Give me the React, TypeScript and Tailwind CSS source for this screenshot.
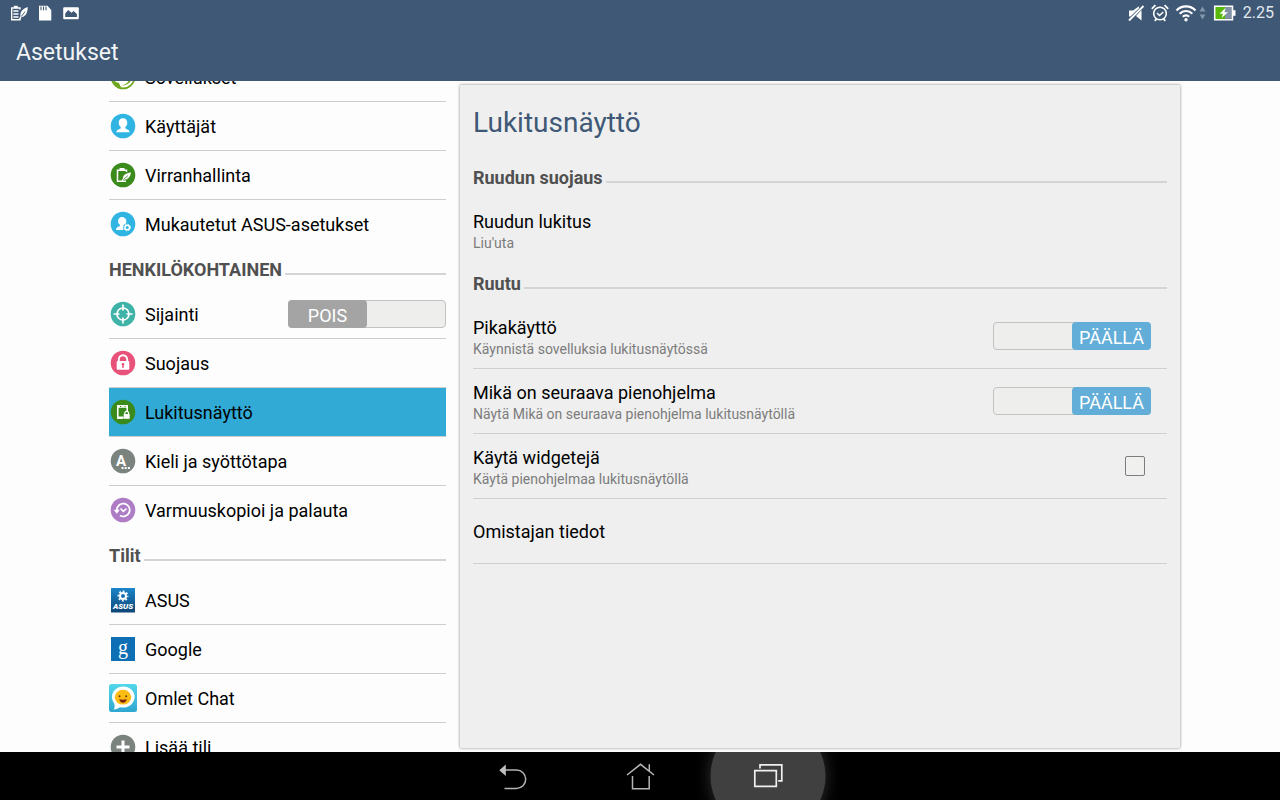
import { useState, type ReactNode } from 'react'
import clsx from 'clsx'

function Disc({ color, children }: { color: string; children: ReactNode }) {
  return (
    <svg viewBox="0 0 28 28" className="size-7 shrink-0" aria-hidden="true">
      <circle cx="14" cy="14" r="12.3" fill={color} />
      {children}
    </svg>
  )
}

function AppsIcon() {
  return (
    <Disc color="#6da51c">
      <circle cx="14" cy="14" r="10.6" fill="#fff" />
      <path d="M3.500 16c2 1 3 3.500 5 3.500s2 2.500 4 5.300c-5-.8-8.500-4.500-9-8.800z" fill="#6da51c" />
      <path d="M12 22.500c4 .5 8-1.500 10-5l-2.500.5c-1.500 2.500-4 4-7.500 4.500z" fill="#6da51c" />
    </Disc>
  )
}

function UserIcon() {
  return (
    <Disc color="#30b4e2">
      <path
        d="M14 6.300c-2.700 0-4.300 1.900-4.300 4.500 0 1.900.8 3.400 2 4.300v1.300c-1.500.9-4.300 1.300-4.300 3.800h13.200c0-2.500-2.800-2.900-4.300-3.800v-1.300c1.200-.9 2-2.400 2-4.300 0-2.600-1.600-4.500-4.300-4.500z"
        fill="#fff"
      />
    </Disc>
  )
}

function PowerSaverIcon() {
  return (
    <Disc color="#3a8a1c">
      <path d="M17.500 11V9.200h-9v11h8.500" fill="none" stroke="#fff" strokeWidth="1.500" />
      <path d="M10.500 7h5v2.500h-5z" fill="#fff" />
      <path d="M22 11.500c-5 .8-8.300 2.500-8.100 6l-1.700 2.700 1 .5 1.500-2c4 .5 6.500-2.700 7.300-7.200z" fill="#fff" />
      <path d="M14.500 18.500l4.500-4" stroke="#3a8a1c" strokeWidth=".8" />
    </Disc>
  )
}

function CustomIcon() {
  return (
    <Disc color="#30b4e2">
      <path
        d="M13 7c-2.400 0-4 1.700-4 4 0 1.700.8 3 1.900 3.800v1.200C9.500 16.800 7 17.200 7 20h8l2-6c.2-.8.300-1.800.3-3 0-2.300-1.900-4-4.300-4z"
        fill="#fff"
      />
      <circle cx="18.200" cy="17.500" r="4.300" fill="#30b4e2" />
      <circle cx="18.200" cy="17.500" r="2.300" fill="none" stroke="#fff" strokeWidth="1.500" />
      <circle cx="18.200" cy="17.500" r="3.300" fill="none" stroke="#fff" strokeWidth="1" strokeDasharray="1.300 1.290" />
    </Disc>
  )
}

function LocationIcon() {
  return (
    <Disc color="#3fb3a8">
      <circle cx="14" cy="14" r="6" fill="none" stroke="#fff" strokeWidth="1.700" />
      <path d="M14 4.500v6M14 17.500v6M4.500 14h6M17.500 14h6" stroke="#fff" strokeWidth="1.700" />
    </Disc>
  )
}

function SecurityIcon() {
  return (
    <Disc color="#e8527a">
      <path d="M9.800 13v-2.500a4.200 4.200 0 0 1 8.400 0V13" fill="none" stroke="#fff" strokeWidth="1.900" />
      <rect x="7.700" y="12" width="12.600" height="8.800" rx="1" fill="#fff" />
      <path d="M14 14a1.400 1.400 0 0 1 .7 2.600V19h-1.400v-2.400A1.400 1.400 0 0 1 14 14z" fill="#e8527a" />
    </Disc>
  )
}

function LockScreenIcon() {
  return (
    <Disc color="#3a8a1c">
      <path d="M18.200 13V8H8.800v12h5" fill="none" stroke="#fff" strokeWidth="1.600" />
      <path d="M8 7.200h11v2.600H8zM8 18.500h6.500v2.300H8z" fill="#fff" />
      <path d="M11 8.500h1.200M15.500 8.500h1" stroke="#3a8a1c" />
      <path d="M15.800 16.500v-1.200a1.900 1.900 0 0 1 3.800 0v1.200" fill="none" stroke="#fff" strokeWidth="1.200" />
      <rect x="14.700" y="16" width="6" height="4.800" fill="#fff" />
    </Disc>
  )
}

function LanguageIcon() {
  return (
    <Disc color="#7b837e">
      <text x="12" y="19" textAnchor="middle" fill="#fff" fontFamily="Roboto, sans-serif" fontWeight="700" fontSize="15">
        A
      </text>
      <path d="M12.500 21h2M15.700 21h2M18.900 21h2" stroke="#fff" strokeWidth="1.800" />
    </Disc>
  )
}

function BackupIcon() {
  return (
    <Disc color="#ad7cc5">
      <path d="M7.900 14a6.400 6.400 0 1 1 3 5.400" fill="none" stroke="#fff" strokeWidth="1.800" />
      <path d="M4.600 13.800h6.200l-3 3.900z" fill="#fff" />
      <path d="M11.500 12.500l2.800 2.800 3.200-2.600" fill="none" stroke="#fff" strokeWidth="1.600" />
    </Disc>
  )
}

function AsusIcon() {
  return (
    <svg viewBox="0 0 28 28" className="size-7 shrink-0" aria-hidden="true">
      <defs>
        <linearGradient id="asus" x1="0" y1="0" x2="0" y2="1">
          <stop offset="0" stopColor="#1c86cc" />
          <stop offset="1" stopColor="#0e4474" />
        </linearGradient>
      </defs>
      <rect x="2" y="2" width="24" height="24.500" rx=".5" fill="url(#asus)" />
      <circle cx="14" cy="10" r="3" fill="none" stroke="#fff" strokeWidth="2" />
      <circle cx="14" cy="10" r="4.700" fill="none" stroke="#fff" strokeWidth="1.600" strokeDasharray="1.850 1.841" strokeDashoffset=".9" />
      <text x="14" y="23.200" textAnchor="middle" fill="#fff" fontFamily="Roboto, sans-serif" fontWeight="900" fontStyle="italic" fontSize="8">
        ASUS
      </text>
    </svg>
  )
}

function GoogleIcon() {
  return (
    <svg viewBox="0 0 28 28" className="size-7 shrink-0" aria-hidden="true">
      <rect x="2" y="2" width="24" height="24" fill="#0f6fb5" />
      <text x="14" y="18.500" textAnchor="middle" fill="#fff" fontFamily="Liberation Serif, serif" fontSize="20">
        g
      </text>
    </svg>
  )
}

function OmletIcon() {
  return (
    <svg viewBox="0 0 28 28" className="size-7 shrink-0" aria-hidden="true">
      <defs>
        <linearGradient id="omlet" x1="0" y1="0" x2="0" y2="1">
          <stop offset="0" stopColor="#52d8ea" />
          <stop offset="1" stopColor="#2fa6d0" />
        </linearGradient>
      </defs>
      <rect width="28" height="28" rx="2.500" fill="url(#omlet)" />
      <ellipse cx="14.300" cy="13" rx="11.300" ry="10.500" fill="#fff" />
      <path d="M5 18.500c1 3 .8 5-.2 7 3-.3 5-1.300 7-3z" fill="#fff" />
      <ellipse cx="14" cy="13.200" rx="8.200" ry="7.400" fill="#fbbc14" />
      <circle cx="10.500" cy="12.300" r="1" fill="#6b3a12" />
      <circle cx="17.200" cy="12.300" r="1" fill="#6b3a12" />
      <path d="M10.300 15.300c2.300.5 5.100.5 7.400 0-.3 2.300-1.800 3.500-3.700 3.500s-3.400-1.200-3.700-3.500z" fill="#7a2410" />
    </svg>
  )
}

function AddIcon() {
  return (
    <Disc color="#7b837e">
      <path d="M14 7.500v13M7.500 14h13" stroke="#fff" strokeWidth="3" />
    </Disc>
  )
}

function StatusBar() {
  return (
    <div className="flex h-[25px] items-center justify-between pl-[10px] pr-[6px] text-white">
      <div className="flex items-center gap-[10px]">
        <svg viewBox="0 0 18 16" className="h-4 w-[18px]" aria-hidden="true">
          <path d="M10 4.500V3H1.700v11.800H10v-2" fill="none" stroke="#fff" strokeWidth="1.400" />
          <path d="M3.800.8h4V3h-4z" fill="#fff" />
          <path d="M3.300 6h5.200M3.300 9h5.200M3.300 12h5.200" stroke="#fff" strokeWidth="1.700" />
          <path d="M17.800 2c-5 1.800-8 4.500-7.300 9L9.300 14l.9.500 1.500-2.500c4.300-.5 5.800-4.500 6.100-10z" fill="#fff" />
          <path d="M11.300 11.500l3.800-5" stroke="#3e5875" strokeWidth=".9" />
        </svg>
        <svg viewBox="0 0 14 16" className="h-4 w-[14px]" aria-hidden="true">
          <path d="M1 .8h8.500L13.300 5v10.500H1z" fill="#fff" />
          <path d="M3 1.500v3.800M5.500 1.500v3.800M8 1.500v3.800" stroke="#3e5875" strokeWidth="1.100" />
        </svg>
        <svg viewBox="0 0 18 16" className="h-4 w-[18px]" aria-hidden="true">
          <rect x="1.200" y="2.200" width="15.600" height="12" rx="1" fill="#fff" />
          <path d="M3.200 12V8.500l3-3.500 3.200 2.800 2.300-1.800 3.200 3V12z" fill="#3e5875" />
        </svg>
      </div>
      <div className="flex items-center gap-[6px]">
        <svg viewBox="0 0 18 18" className="size-[18px]" aria-hidden="true">
          <path d="M2 6.500h4l6-4.300v2L3.500 12.500H2zM14.500 6v10.500L9 12z" fill="#fff" />
          <path d="M2 16.500L16.500 2" stroke="#fff" strokeWidth="1.800" />
        </svg>
        <svg viewBox="0 0 18 18" className="size-[18px]" aria-hidden="true">
          <circle cx="9" cy="9.500" r="6.300" fill="none" stroke="#fff" strokeWidth="1.600" />
          <path d="M.8 4.800l3.600-3.600M17.200 4.800l-3.600-3.600M3.800 17l1.500-2M14.200 17l-1.500-2" stroke="#fff" strokeWidth="1.800" />
          <path d="M6 9l2.500 2.500L12.300 8" fill="none" stroke="#fff" strokeWidth="1.500" />
        </svg>
        <svg viewBox="0 0 32 18" className="h-[18px] w-8" aria-hidden="true">
          <g fill="none" stroke="#fff" strokeWidth="2.200">
            <path d="M1.500 6.500a13 13 0 0 1 19 0" />
            <path d="M4.700 9.700a8.700 8.700 0 0 1 12.600 0" />
            <path d="M7.800 12.800a4.500 4.500 0 0 1 6.400 0" />
          </g>
          <circle cx="11" cy="15.800" r="1.700" fill="#fff" />
          <path d="M27.500 2.500l3 5h-6zM27.500 15.500l3-5h-6z" fill="#8496a9" />
        </svg>
        <svg viewBox="0 0 24 18" className="h-[18px] w-6" aria-hidden="true">
          <path d="M1.800 2.800h18v12h-18z" fill="#8292a5" />
          <path d="M2 3h10v12H2z" fill="#58b80a" />
          <path d="M1.700 2.200h17.800v13.600H1.700z" fill="none" stroke="#fff" strokeWidth="1.500" />
          <path d="M20 6.200h2.500v5.600H20z" fill="#fff" />
          <path d="M12.500 4L6.500 9.800h3.500L8.500 14l6.500-5.800h-3.500z" fill="#fff" />
        </svg>
        <time className="text-base text-[#e4e9ee]">2.25</time>
      </div>
    </div>
  )
}

function SectionHeader({ children }: { children: ReactNode }) {
  return (
    <h2 className="flex h-[42px] items-center gap-[3px] pt-[2px] text-lg font-bold text-[#505050]">
      {children}
      <span className="mt-2 h-[2px] flex-1 bg-[#d2d4d5]" />
    </h2>
  )
}

function Switch({ label, defaultOn = false }: { label: string; defaultOn?: boolean }) {
  const [on, setOn] = useState(defaultOn)
  return (
    <button
      type="button"
      role="switch"
      aria-checked={on}
      aria-label={label}
      onClick={() => setOn(!on)}
      className={clsx(
        'flex h-7 w-[158px] shrink-0 rounded-[4px] border border-[#c2c2c2] bg-[#eeeeed]',
        on ? 'justify-end' : 'justify-start',
      )}
    >
      <span
        className={clsx(
          '-my-px flex h-7 w-[79px] items-center justify-center rounded-[4px] pt-[3px] text-lg text-white',
          on ? '-mr-px bg-[#62aed8]' : '-ml-px bg-[#a4a4a4]',
        )}
      >
        {on ? 'PÄÄLLÄ' : 'POIS'}
      </span>
    </button>
  )
}

type ItemProps = {
  icon: ReactNode
  label: string
  selected?: boolean
  last?: boolean
  control?: ReactNode
}

function Item({ icon, label, selected, last, control }: ItemProps) {
  return (
    <li
      className={clsx(
        'flex items-center',
        selected && 'bg-[#31abd6]',
        !last && 'border-b border-[#cbcdce]',
      )}
    >
      <button
        type="button"
        aria-current={selected ? 'page' : undefined}
        className="flex h-12 flex-1 items-center gap-2 text-left text-lg text-black"
      >
        {icon}
        <span className="pt-px">{label}</span>
      </button>
      {control}
    </li>
  )
}

function Sidebar() {
  return (
    <nav aria-label="Asetukset" className="w-[337px] shrink-0 overflow-hidden">
      {/* list is scrolled down a bit, first row is partly hidden */}
      <div className="-mt-7">
        <ul>
          <Item icon={<AppsIcon />} label="Sovellukset" />
          <Item icon={<UserIcon />} label="Käyttäjät" />
          <Item icon={<PowerSaverIcon />} label="Virranhallinta" />
          <Item icon={<CustomIcon />} label="Mukautetut ASUS-asetukset" last />
        </ul>
        <SectionHeader>HENKILÖKOHTAINEN</SectionHeader>
        <ul>
          <Item icon={<LocationIcon />} label="Sijainti" control={<Switch label="Sijainti" />} />
          <Item icon={<SecurityIcon />} label="Suojaus" />
          <Item icon={<LockScreenIcon />} label="Lukitusnäyttö" selected />
          <Item icon={<LanguageIcon />} label="Kieli ja syöttötapa" />
          <Item icon={<BackupIcon />} label="Varmuuskopioi ja palauta" last />
        </ul>
        <SectionHeader>Tilit</SectionHeader>
        <ul>
          <Item icon={<AsusIcon />} label="ASUS" />
          <Item icon={<GoogleIcon />} label="Google" />
          <Item icon={<OmletIcon />} label="Omlet Chat" />
          <Item icon={<AddIcon />} label="Lisää tili" last />
        </ul>
      </div>
    </nav>
  )
}

type SettingProps = {
  title: string
  summary?: string
  last?: boolean
  htmlFor?: string
  children?: ReactNode
}

function Setting({ title, summary, last, htmlFor, children }: SettingProps) {
  const text = (
    <>
      <span className="text-lg leading-6 text-black">{title}</span>
      {summary && <span className="text-sm leading-[18px] text-[#7c7c7c]">{summary}</span>}
    </>
  )
  const textClass = 'flex h-16 flex-1 flex-col justify-center pt-[2px] text-left'
  return (
    <li className={clsx('flex items-center', !last && 'border-b border-[#cfcfcf]')}>
      {htmlFor ? (
        <label htmlFor={htmlFor} className={textClass}>
          {text}
        </label>
      ) : (
        <button type="button" className={textClass}>
          {text}
        </button>
      )}
      {children}
    </li>
  )
}

function LockScreenPanel() {
  return (
    <main className="mb-1 mt-1 flex-1 rounded-[1px] bg-[#efefef] px-[13px] shadow-[0_0_3px_rgba(0,0,0,0.5)]">
      <h1 className="flex h-[71px] items-center pt-1 text-[28px] text-[#3e5875]">Lukitusnäyttö</h1>
      <SectionHeader>Ruudun suojaus</SectionHeader>
      <ul>
        <Setting title="Ruudun lukitus" summary="Liu'uta" last />
      </ul>
      <SectionHeader>Ruutu</SectionHeader>
      <ul>
        <Setting title="Pikakäyttö" summary="Käynnistä sovelluksia lukitusnäytössä">
          <div className="mr-4">
            <Switch label="Pikakäyttö" defaultOn />
          </div>
        </Setting>
        <Setting title="Mikä on seuraava pienohjelma" summary="Näytä Mikä on seuraava pienohjelma lukitusnäytöllä">
          <div className="mr-4">
            <Switch label="Mikä on seuraava pienohjelma" defaultOn />
          </div>
        </Setting>
        <Setting title="Käytä widgetejä" summary="Käytä pienohjelmaa lukitusnäytöllä" htmlFor="widgets">
          <input
            id="widgets"
            type="checkbox"
            className="mr-[22px] size-5 appearance-none rounded-[2px] border border-[#7d7d7d] bg-[#f0f0ef] checked:bg-[#62aed8]"
          />
        </Setting>
        <Setting title="Omistajan tiedot" />
      </ul>
    </main>
  )
}

function NavBar() {
  return (
    <footer className="flex h-12 shrink-0 justify-center overflow-hidden bg-black">
      <button type="button" aria-label="Takaisin" className="flex w-32 items-center justify-center">
        <svg viewBox="0 0 30 30" className="size-[30px]" fill="none" stroke="#b4b4b4" strokeWidth="1.500" aria-hidden="true">
          <path d="M8 9h11.500a9.200 9.200 0 0 1 0 18.400H7.500" />
          <path d="M8.800 3.500v11.500L2.300 9.200z" fill="#c0c0c0" stroke="none" />
        </svg>
      </button>
      <button type="button" aria-label="Koti" className="flex w-32 items-center justify-center">
        <svg viewBox="0 0 30 30" className="size-[30px]" fill="none" stroke="#b4b4b4" strokeWidth="1.500" aria-hidden="true">
          <path d="M2 14L15.500 3.300 29 14M24.300 10V3.300" />
          <path d="M7.500 15v12.800h16.700V15" />
        </svg>
      </button>
      <button type="button" aria-label="Viimeisimmät" className="relative flex w-32 items-center justify-center">
        <span className="absolute left-1/2 top-1/2 size-[115px] -translate-1/2 rounded-full bg-[#404040] shadow-[0_0_16px_rgba(255,255,255,0.2)]" />
        <svg viewBox="0 0 30 30" className="relative size-[30px]" fill="none" stroke="#f0f0f0" strokeWidth="1.700" aria-hidden="true">
          <path d="M1.800 9.700h21.500v15.700H1.800z" />
          <path d="M7 7.500V3.800h21.800v16h-3.600" />
        </svg>
      </button>
    </footer>
  )
}

export default function App() {
  return (
    <div className="flex h-screen flex-col overflow-hidden bg-[#fdfdfd] font-[Roboto,sans-serif]">
      <header className="shrink-0 bg-[#3e5875]">
        <StatusBar />
        <div className="flex h-14 items-center px-4 text-[23px] text-[#f2f4f6]">Asetukset</div>
      </header>
      <div className="flex min-h-0 flex-1 gap-[14px] pl-[109px] pr-[100px]">
        <Sidebar />
        <LockScreenPanel />
      </div>
      <NavBar />
    </div>
  )
}
